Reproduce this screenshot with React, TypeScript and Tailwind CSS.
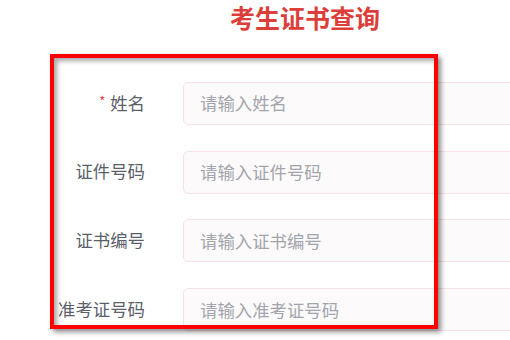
import React from "react";

const rows = [
  { label: "姓名", required: true, ph: "请输入姓名" },
  { label: "证件号码", required: false, ph: "请输入证件号码" },
  { label: "证书编号", required: false, ph: "请输入证书编号" },
  { label: "准考证号码", required: false, ph: "请输入准考证号码" },
];

export default function App() {
  return (
    <div
      className="relative w-[510px] h-[340px] overflow-hidden bg-white"
      style={{ fontFamily: '"Microsoft YaHei", "Noto Sans CJK SC", "Noto Sans", sans-serif' }}
    >
      <div className="w-[610px] text-center pt-[4px] text-[25px] leading-[27px] font-bold text-[#dc3f3a]">
        考生证书查询
      </div>
      <div className="flex flex-col pt-[51px]">
        {rows.map((r) => (
          <div key={r.label} className="flex items-center h-[43px] mb-[25.7px]">
            <div className="w-[145px] shrink-0 flex justify-end items-center text-[17.4px] leading-[20px] -mt-[2px] text-[#5b5f6a] whitespace-nowrap">
              {r.required && <span className="text-[#f0463c] text-[13px] mr-[5px] -mt-[4px]">*</span>}
              {r.label}
            </div>
            <div className="ml-[38px] shrink-0 w-[420px] h-[43px] rounded-[5px] border border-[#f7e3e3] bg-[#fcfafa] flex items-center pl-[16px] text-[17.4px] text-[#a3a5ad] whitespace-nowrap">
              {r.ph}
            </div>
          </div>
        ))}
      </div>
      <div className="absolute left-[50px] top-[54px] w-[388px] h-[275px] border-[4px] border-[#ff0000] shadow-[3px_3px_5px_rgba(0,0,0,0.45),inset_3px_3px_5px_rgba(0,0,0,0.35)]" />
    </div>
  );
}
